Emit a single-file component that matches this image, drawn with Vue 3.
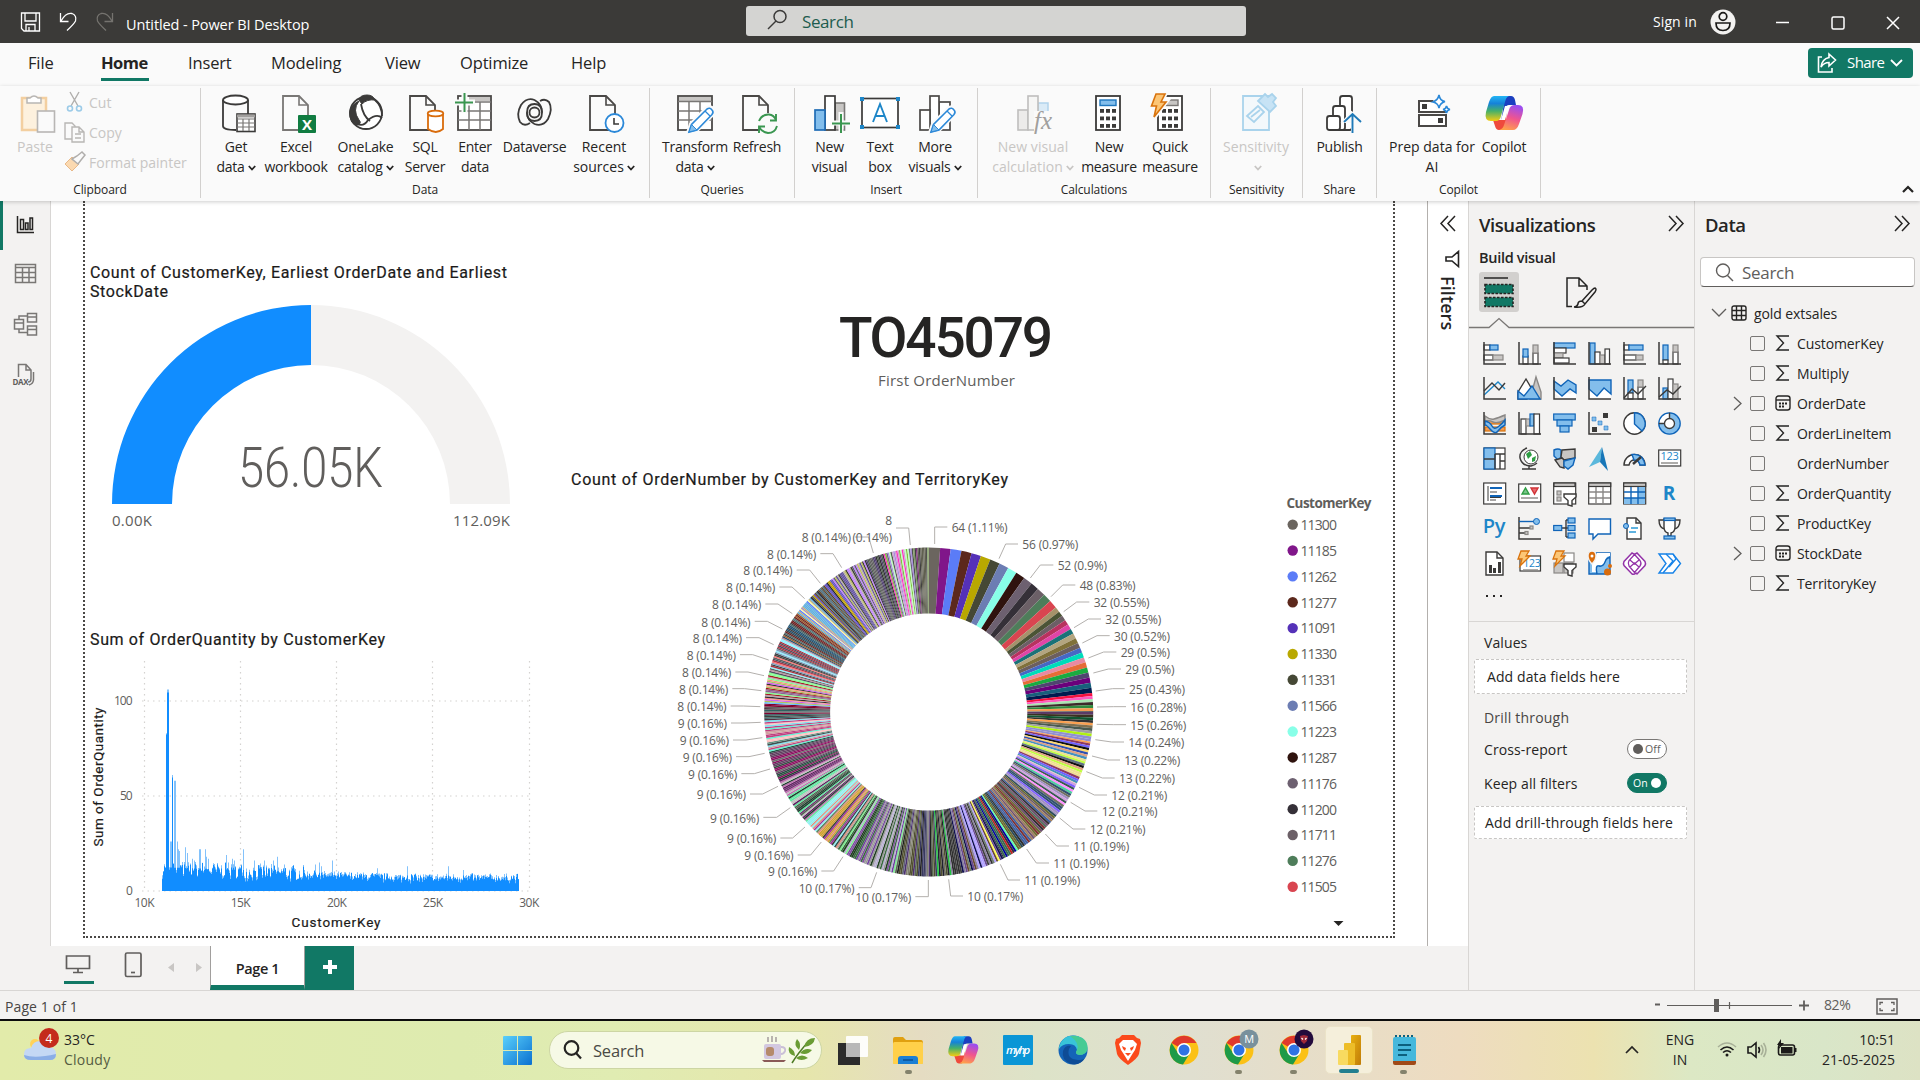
<script setup>
const page = (x, c = '#4a4846') =>
  `<path d="M${x + 1} 4H${x + 17}L${x + 26} 13V38H${x + 1}Z" fill="#fbfbfb" stroke="${c}" stroke-width="1.8"/><path d="M${x + 17} 4V13H${x + 26}" fill="none" stroke="${c}" stroke-width="1.6"/>`
const pencil = (x, y) =>
  `<g transform="translate(${x} ${y})"><path d="M-1 25L2 16 18 0Q22-2 24 1 26 4 24 6L8 22Z" fill="#fafafa" stroke="#fafafa" stroke-width="4"/><path d="M0 24L2.500 16.500 18 1Q21-1 23 2 25 4 23 6.500L8 22Z" fill="#fff" stroke="#2b88d8" stroke-width="1.600"/><path d="M0 24L2.500 16.500 8 22Z" fill="#83beec" stroke="#2b88d8"/><path d="M16 3L21 8" stroke="#2b88d8" stroke-width="1.300"/></g>`
const dots = (x, y, c) => [0, 1, 2].flatMap(r => [0, 1, 2].map(k => `<rect x="${x + k * 6}" y="${y + r * 7.5}" width="4" height="3.800" fill="${c}"/>`)).join('')
const copilot = `<defs><linearGradient id="cpa" x1="0" y1="0" x2="0" y2="1"><stop offset="0" stop-color="#22b5f5"/><stop offset=".3" stop-color="#1682d8"/><stop offset=".6" stop-color="#45b06a"/><stop offset="1" stop-color="#f5cc12"/></linearGradient><linearGradient id="cpb" x1=".6" y1="0" x2=".3" y2="1"><stop offset="0" stop-color="#9b4df0"/><stop offset=".5" stop-color="#f0558e"/><stop offset="1" stop-color="#ffa24a"/></linearGradient></defs><path d="M21 4H27Q30 4 31 8L32 13H25Q22 13 21 17L17 30Z" fill="#1b3fc0"/><path d="M9 28H17Q19 28 20 24L23 14 22 29Q21 38 18 38H15Q12 38 11 34Z" fill="#ef4a3c"/><path d="M10 4H25Q22 5 21 10L17 24Q16 29 12 29H7Q0 29 2 20L5 10Q7 4 10 4Z" fill="url(#cpa)"/><path d="M31 13H34Q41 13 38.500 22L35 32Q33 38 29 38H15Q19 37 20 33L25 18Q26 13 31 13Z" fill="url(#cpb)"/><path d="M21 14H25L21 28H17Z" fill="#fff"/>`

const ribbonIcons = {
  get: `<path d="M7 8V34Q7 38 20 38M32 8V22" fill="none" stroke="#3b3a39" stroke-width="1.800"/><ellipse cx="19.500" cy="8" rx="12.500" ry="4.500" fill="#fff" stroke="#3b3a39" stroke-width="1.800"/><rect x="21" y="22" width="18" height="17.500" fill="#fff" stroke="#3b3a39" stroke-width="1.600"/><path d="M21 24H39" stroke="#a19f9d" stroke-width="3"/><path d="M21 27H39M21 31H39M21 35H39M27 27V39M33 27V39" stroke="#797775" stroke-width="1.200"/>`,
  excel: page(6, '#797775') + `<rect x="22" y="23" width="18" height="18" rx="1" fill="#107c41"/><text x="31" y="37.500" text-anchor="middle" font-size="15" font-weight="700" fill="#fff">X</text>`,
  onelake: `<circle cx="20" cy="21" r="16" fill="#fff" stroke="#3b3a39" stroke-width="1.800"/><path d="M13 8Q14 3 21 3 27 3 29 8 21 7 16 12Z" fill="#3b3a39" stroke="#3b3a39"/><path d="M13 9Q2 14 4 25 6 34 12 33 16 31 13 28 6 18 13 9Z" fill="#3b3a39" stroke="#3b3a39"/><path d="M15 12Q17 24 24 29M11 32Q18 35 22 28 31 21 36 26M29 8Q36 14 36 24" fill="none" stroke="#3b3a39" stroke-width="1.800"/>`,
  sql: page(4) + `<path d="M23 22V37Q31 43 38 37V22Z" fill="#fff" stroke="#d96c0c" stroke-width="1.800"/><ellipse cx="30.500" cy="21.500" rx="7.800" ry="2.800" fill="#fff" stroke="#d96c0c" stroke-width="1.800"/>`,
  enter: `<rect x="3" y="4" width="33" height="34" fill="#fff" stroke="#4a4846" stroke-width="1.800"/><rect x="14" y="5" width="21" height="4" fill="#c8c6c4"/><path d="M3 19H36M3 28H36M14 10V38M25 10V38M14 10H36" stroke="#797775" stroke-width="1.500"/><path d="M9.500-1V21M-1 10.500H20" stroke="#fafafa" stroke-width="6"/><path d="M9.500 1V20M0 10.500H18" stroke="#3a9650" stroke-width="2"/>`,
  dataverse: `<g fill="none" stroke="#3b3a39" stroke-width="1.800"><circle cx="19.500" cy="20.500" r="5"/><path d="M27 20.500Q27 12 19.500 12 12 12 12 20.500 12 28 19.500 32 28 35 33 27 38 17 34 10 30 6 25 9"/><path d="M12 20.500Q12 29 19.500 29 27 29 27 20.500 27 12 19.500 8 12 5 6 13 1 22 5 30 9 35 15 31"/></g>`,
  recent: page(5) + `<circle cx="30.500" cy="31" r="9" fill="#fff" stroke="#2b88d8" stroke-width="1.800"/><path d="M30 26V32H35" fill="none" stroke="#3b3a39" stroke-width="1.600"/>`,
  transform: `<rect x="3" y="4" width="34" height="34" fill="#fff" stroke="#4a4846" stroke-width="1.800"/><rect x="4" y="5" width="32" height="4" fill="#c8c6c4"/><path d="M3 9.500H37M3 19H37M3 28H37M14 10V38M25 10V38" stroke="#797775" stroke-width="1.500"/>` + pencil(14, 16),
  refresh: page(5) + `<circle cx="31" cy="32" r="11" fill="#fafafa"/><g fill="none" stroke="#3a9650" stroke-width="1.900"><path d="M22 29Q25 22 32 22.500 37 23 39 28M39 22V28.500H33M40 34Q38 41 31 41 25 40 22 35M22 41V34.500H28"/></g>`,
  newvisual: `<rect x="25" y="11" width="9.500" height="27" fill="#c8c6c4" stroke="#797775" stroke-width="1.600"/><rect x="15" y="4" width="10" height="34" fill="#fff" stroke="#3b3a39" stroke-width="1.700"/><rect x="5" y="18" width="10" height="20" fill="#83beec" stroke="#1f6cb5" stroke-width="1.700"/><path d="M31 20V42M20 31H42" stroke="#fafafa" stroke-width="5"/><path d="M31 22V41M22 31.500H40" stroke="#3a9650" stroke-width="2"/>`,
  textbox: `<rect x="2" y="6.500" width="36" height="29" fill="#fff" stroke="#3b3a39" stroke-width="1.700"/><path d="M0 5h4v4h-4zM36 5h4v4h-4zM0 33h4v4h-4zM36 33h4v4h-4z" fill="#1d86c8"/><path d="M13 30L20 12 27 30M15.500 24H24.500" fill="none" stroke="#1d86c8" stroke-width="1.900"/>`,
  more: `<rect x="24" y="10" width="11" height="28" fill="#fff" stroke="#4a4846" stroke-width="1.700"/><rect x="15" y="4" width="9" height="34" fill="#fff" stroke="#4a4846" stroke-width="1.700"/><rect x="5" y="18" width="10" height="20" fill="#fff" stroke="#4a4846" stroke-width="1.700"/>` + pencil(16, 16),
  viscalc: `<g opacity=".45"><rect x="5" y="18" width="10" height="20" fill="#dcdad8" stroke="#797775" stroke-width="1.600"/><rect x="25" y="11" width="10" height="15" fill="#b5d9f5" stroke="#5aa5dc" stroke-width="1.500"/><rect x="15" y="4" width="10" height="34" fill="#f3f2f1" stroke="#797775" stroke-width="1.600"/></g><rect x="21" y="19" width="20" height="22" fill="#fafafa"/><text x="21" y="37" font-family="Liberation Serif, serif" font-style="italic" font-size="25" fill="#a19f9d">fx</text>`,
  measure: `<rect x="7" y="4" width="24" height="34" fill="#fff" stroke="#3b3a39" stroke-width="1.800"/><rect x="11" y="8" width="16" height="5.500" fill="#83beec" stroke="#1f77bf" stroke-width="1.400"/>` + dots(11, 17, '#3b3a39'),
  quick: `<rect x="8" y="4" width="24" height="34" fill="#fff" stroke="#3b3a39" stroke-width="1.800"/><rect x="12" y="8" width="16" height="5.500" fill="#c8c6c4" stroke="#797775" stroke-width="1.400"/>` + dots(12, 17, '#3b3a39') + `<path d="M6 1H16L12 9H17L4 26 6 15H1Z" fill="#fcd08a" stroke="#fafafa" stroke-width="4"/><path d="M6 2H15L11 10H16L4 25 6.500 14H1.500Z" fill="#fcc676" stroke="#d9730d" stroke-width="1.600"/>`,
  sens: `<g fill="#f3f8fb" stroke="#a9d3ec" stroke-width="1.800"><path d="M7 4H33V38H7Z"/><path d="M22 9L29 2 32 5 36 2 40 6 37 10 40 14 34 20Z" fill="#c7e3f5"/><path d="M11 24L22 14 28 20 18 30ZM15 25L24 18"/></g>`,
  publish: `<g fill="#fff" stroke="#3b3a39" stroke-width="1.800"><rect x="20" y="4" width="12" height="34" rx="2.500"/><rect x="13" y="14" width="12" height="24" rx="2.500"/><rect x="7" y="24" width="13" height="14" rx="2.500"/></g><path d="M33 20V42M33 20L25 29H42" fill="#fafafa" stroke="#fafafa" stroke-width="4"/><path d="M32.500 41V22M24 30L32.500 22 41 30" fill="none" stroke="#1f7ab8" stroke-width="1.900"/>`,
  prep: `<g fill="#fff" stroke="#4a4846" stroke-width="2"><rect x="7" y="9" width="27" height="11"/><rect x="7" y="23" width="27" height="11"/></g><rect x="10" y="12" width="5" height="5" fill="#3b3a39"/><rect x="26" y="26" width="5" height="5" fill="#3b3a39"/><path d="M20 4h17v13h-13z" fill="#fafafa"/><g fill="#fff" stroke="#2b88d8" stroke-width="1.600"><path d="M27 3Q28 9 33 9.500 28 11 27 16 26 11 21 10 26 8 27 3Z"/><path d="M34.500 14Q35 17 38 17.500 35 18 34.500 21 34 18 31 17.500 34 17 34.500 14Z"/></g>`,
  copilot,
}

const groups = [
  { n: 'Data', w: 449, p: 7, items: [['get', 56, 'Get', 'data', 1], ['excel', 64, 'Excel', 'workbook'], ['onelake', 75, 'OneLake', 'catalog', 1], ['sql', 44, 'SQL', 'Server'], ['enter', 56, 'Enter', 'data'], ['dataverse', 63, 'Dataverse', ''], ['recent', 76, 'Recent', 'sources', 1]] },
  { n: 'Queries', w: 145, p: 12, items: [['transform', 66, 'Transform', 'data', 1], ['refresh', 58, 'Refresh', '']] },
  { n: 'Insert', w: 183, p: 5, items: [['newvisual', 59, 'New', 'visual'], ['textbox', 42, 'Text', 'box'], ['more', 68, 'More', 'visuals', 1]] },
  { n: 'Calculations', w: 233, p: 12, items: [['viscalc', 86, 'New visual', 'calculation', 1, 1], ['measure', 66, 'New', 'measure'], ['quick', 56, 'Quick', 'measure']] },
  { n: 'Sensitivity', w: 92, p: 5, items: [['sens', 80, 'Sensitivity', '', 1, 1]] },
  { n: 'Share', w: 74, p: 5, items: [['publish', 63, 'Publish', '']] },
  { n: 'Copilot', w: 164, p: 11, items: [['prep', 88, 'Prep data for', 'AI'], ['copilot', 56, 'Copilot', '']] },
]
const tabs = [['File', 28, 27], ['Home', 46, 48], ['Insert', 39, 43], ['Modeling', 40, 74], ['View', 40, 37], ['Optimize', 38, 71], ['Help', 40, 36]]

/* Line chart */
let seed = 7
const rnd = () => ((seed = (seed * 16807) % 2147483647) / 2147483647)
const peaks = { 165: 12, 166: 83, 167: 106, 168: 106, 170: 26, 171: 26, 172: 61, 174: 58, 175: 58, 177: 26, 178: 22, 179: 21, 185: 23, 187: 20, 192: 17, 194: 16, 199: 22, 200: 22, 205: 22, 206: 18, 208: 17, 226: 19, 228: 15, 232: 17, 234: 16, 243: 22, 254: 16, 264: 16, 273: 16, 277: 18, 284: 14, 315: 14, 319: 15, 321: 13, 332: 16, 377: 12, 407: 13, 448: 13, 463: 11 }
const bars = []
for (let x = 162; x < 519; x++) {
  const t = (x - 162) / 357
  const top = 11.5 - 4.4 * Math.min(1, t * 1.5)
  const v = peaks[x] || top + (rnd() - 0.4) * (t < 0.4 ? 8 : 3.6)
  const d = peaks[x] && !(x > 165 && x < 169) && x !== 172 ? top + 1 : v - rnd() * 2
  bars.push({ x, v: v * 1.9, d: d * 1.9 })
}
const light = bars.map(b => `M${b.x} 891V${(891 - b.v).toFixed(1)}h1V891z`).join('')
const dark = bars.map(b => `M${b.x} 891V${(891 - b.d).toFixed(1)}h1V891z`).join('')

/* Donut chart */
const slices = []
let ang = 0
const polar = (r, a) => `${(928.7 + r * Math.sin(a * Math.PI / 180)).toFixed(2)} ${(712 - r * Math.cos(a * Math.PI / 180)).toFixed(2)}`
const slice = (w, c) => {
  const b = ang + w
  slices.push({ c, d: `M${polar(164.5, ang)}A164.500 164.500 0 0 1 ${polar(164.5, b)}L${polar(98.6, b)}A98.600 98.600 0 0 0 ${polar(98.6, ang)}Z` })
  ang = b
}
const keys = [['11300', '#6b655f'], ['11185', '#80168a'], ['11262', '#5b7cf7'], ['11277', '#5c281c'], ['11091', '#5531b8'], ['11330', '#b9a800'], ['11331', '#454835'], ['11566', '#6c7db3'], ['11223', '#88ffe8'], ['11287', '#2f130e'], ['11176', '#6d6070'], ['11200', '#353038'], ['11711', '#6c6067'], ['11276', '#4e7d5a'], ['11505', '#d94550']]
const big = [4, 3.7, 3.8, 3.6, 3.4, 3.5, 3.5, 3.4, 3.3, 3.3, 3.2, 2.9, 3, 3, 3]
keys.forEach((k, i) => slice(big[i], k[1]))
'#a6926a #4b5435 #6c5f66 #b8325f #e044a7 #1a7278 #b3a580 #80713a #6c5f5f #4668c5 #00dcba #e88aa2 #e66c37 #1aab40 #4f4570 #6b007b #17607c #001b4f'.split(' ').forEach(c => slice(1.82, c))
const regions = [
  [90, 1.05, 'f5113f ff5bc0 a8e4b0 3d2a2a 2f8a3d f39b52 606060'],
  [101, .95, '5a3a66 3a3020 105530 333333 fba050 807050 4a5a50 a0a0a0 b0f010 9090d0'],
  [116, .82, '8f3a5f 7060ff 101010 ffd870 3050b0 e0a080 4590c0 f0e090 c0ff40 607080'],
  [129, .78, 'd0a0e0 8060ff 3a5a50 ff90ff 50d0a0 305070 707060 a090c0'],
  [147, .72, '2a4a5a 6a6a30 6a5a6a a08060 4060a0 303030 705070 507060 803030'],
  [153, .7, '60ffb0 0000a0 30303a c02020 3a6a50'],
  [172, .66, '101050 6a4a90 ffff50 6a4a30 b0a0ff 708070 303030 8a80a0 404040'],
  [177, .62, '20c040 202030 505030 707060'],
  [192, .62, '383860 505030 5a6a50 202020 4b3070 808070 606078'],
  [214, .6, '80f090 7040a0 b8b0d0 3a6a40 8050a0 204020 9a9a9a'],
  [228, .58, 'e09080 305050 90f0f0 404040 a030a0 608060 d0a030'],
  [246, .56, '60e8a0 c070b0 204030 602060 c0c0c0 506050 703070'],
  [256, .56, '8a1060 305040 205040 604060 707070'],
  [267, .55, '60f0d0 c04080 d0a0a0 80e0f0 405050 609080 ffc0c0'],
  [273, .55, '503040 3a6a6a 404040 306060 800030 606060'],
  [284, .5, '60c0ff b0c060 d060f0 ff9080 303030 c0a0b0 a02020 80ff90 906090'],
  [297, .5, '505060 c090a0 606060 90f0ff b03040 404040 80a0c0 ff7070'],
  [307, .5, '205070 a06030 404040 507070 702020'],
  [314, .5, '60b0e0 c0b080 6080ff ffffa0 b090c0'],
  [324, .5, '202030 505050 c0a000 6050c0 604020 507080'],
  [337, .5, 'c080ff 606070 c0c060 6050a0 b8b0a8 404030'],
  [344, .5, '303030 504070 506050 606060'],
  [354, .5, 'ff30c0 80c040 706080 a890e0 c0ffc0 506050 d0a0d0'],
  [360, .5, '505050 80a060 404040 803080 606050'],
]
for (const [end, w, cs] of regions) {
  const list = cs.split(' ')
  let i = 0
  while (ang < end - 0.01) {
    const j = i < list.length ? i : Math.floor(rnd() * list.length)
    slice(Math.min(w, end - ang), '#' + list[j])
    i++
  }
}
const rightLabels = [['64 (1.11%)', 875, 203, 824, 824, 252], ['56 (0.97%)', 1087, 254, 1037, 1017, 296], ['52 (0.9%)', 1193, 317, 1141, 1111, 354], ['48 (0.83%)', 1259, 377, 1208, 1173, 410], ['32 (0.55%)', 1301, 428, 1250, 1211, 455], ['32 (0.55%)', 1336, 479, 1285, 1242, 503], ['30 (0.52%)', 1362, 529, 1311, 1267, 549], ['29 (0.5%)', 1382, 578, 1331, 1285, 594], ['29 (0.5%)', 1396, 629, 1345, 1300, 639], ['25 (0.43%)', 1407, 688, 1358, 1307, 693], ['16 (0.28%)', 1411, 742, 1360, 1311, 741], ['15 (0.26%)', 1411, 796, 1360, 1310, 793], ['14 (0.24%)', 1405, 848, 1355, 1306, 839], ['13 (0.22%)', 1393, 902, 1343, 1296, 888], ['13 (0.22%)', 1377, 956, 1327, 1279, 935], ['12 (0.21%)', 1354, 1007, 1303, 1257, 982], ['12 (0.21%)', 1325, 1055, 1275, 1232, 1027], ['12 (0.21%)', 1289, 1109, 1239, 1199, 1074], ['11 (0.19%)', 1240, 1160, 1190, 1156, 1122], ['11 (0.19%)', 1180, 1211, 1129, 1100, 1167], ['11 (0.19%)', 1093, 1262, 1044, 1021, 1213], ['10 (0.17%)', 922, 1310, 872, 866, 1258]]
const e = '8 (0.14%)', n = '9 (0.16%)', m = '10 (0.17%)'
const leftLabels = [[e, 573, 233, 626, 640, 279], [e, 469, 283, 519, 545, 323], [e, 398, 332, 449, 481, 370], [e, 346, 383, 396, 434, 416], [e, 304, 434, 354, 397, 461], [e, 272, 486, 322, 367, 507], [e, 246, 535, 297, 341, 554], [e, 228, 586, 278, 326, 600], [e, 214, 638, 264, 312, 647], [e, 205, 688, 254, 304, 692], [e, 200, 740, 250, 301, 740], [n, 201, 791, 252, 302, 787], [n, 207, 842, 258, 307, 833], [n, 216, 892, 267, 314, 880], [n, 232, 943, 283, 330, 927], [n, 258, 1004, 308, 354, 979], [n, 298, 1074, 350, 391, 1043], [n, 349, 1136, 398, 435, 1101], [n, 401, 1187, 452, 484, 1146], [n, 472, 1235, 521, 549, 1190], [m, 584, 1285, 633, 650, 1237], [m, 754, 1312, 805, 805, 1260]]
const X = v => 660 + v / 3
const Y = v => 460 + v / 3
const labels = [
  ...rightLabels.map(l => ({ t: l[0], x: X(l[1]), y: Y(l[2]) + 4.5, w: l[0].length * 6.7 - 11, d: `M${X(l[4])} ${Y(l[5])}L${X(l[3])} ${Y(l[2] - 2)}H${X(l[1] - 13)}` })),
  ...leftLabels.map(l => ({ t: l[0], x: X(l[1]) - (l[0].length * 6.7 - 11), y: Y(l[2]) + 4.5, w: l[0].length * 6.7 - 11, d: `M${X(l[4])} ${Y(l[5])}L${X(l[3])} ${Y(l[2] - 2)}H${X(l[1] + 12)}` })),
]

/* Visual gallery, 23 x 23 each */
const K = '#3b3a39', B = '#1064b8', L = '#83beec', G = '#c8c6c4', S = '#8a8886'
const axes = `<path d="M1 0V22H23" fill="none" stroke="${K}" stroke-width="1.500"/>`
const r = (x, y, w, h, f = '#fff', s = K) => `<rect x="${x}" y="${y}" width="${w}" height="${h}" fill="${f}" stroke="${s}" stroke-width="1.200"/>`
const p = (d, s = K, f = 'none', w = 1.4) => `<path d="${d}" fill="${f}" stroke="${s}" stroke-width="${w}"/>`
const bolt = `<path d="M3-1H11L8 4H12L2 14 4 7H0Z" fill="#fcc676" stroke="#d9730d" stroke-width="1.300"/>`
const funnel = p('M11 12H23V15L19 18.500V24L15 23V18.500L11 15Z', K, '#fff')
const t = (x, y, s, txt, w = 400, c = '#1d86c8') => `<text x="${x}" y="${y}" font-size="${s}" font-weight="${w}" fill="${c}" text-anchor="middle">${txt}</text>`
const gallery = [
  r(1, 3, 6, 5) + r(7, 3, 8, 5, L, B) + r(1, 13, 9, 5) + r(10, 13, 10, 5, G, S) + axes,
  r(5, 14, 5, 8) + r(5, 7, 5, 8, L, B) + r(15, 11, 5, 11) + r(15, 3, 5, 8, G, S) + axes,
  r(1, 1, 21, 5, L, B) + r(1, 6, 12, 5) + r(1, 11, 9, 5, G, S) + r(1, 16, 15, 5) + axes,
  r(2, 1, 5, 21, L, B) + r(7, 10, 5, 12) + r(12, 13, 5, 9, G, S) + r(17, 7, 4.5, 15) + axes,
  r(1, 3, 5, 5) + r(6, 3, 14, 5, L, B) + r(1, 13, 12, 5) + r(13, 13, 7, 5, G, S) + axes,
  r(5, 3, 5, 15, L, B) + r(5, 18, 5, 4) + r(15, 10, 5, 12) + r(15, 3, 5, 7, G, S) + axes,
  p('M1 18L15 5 22 12', '#1d86c8') + p('M1 14L9 6 16 13 22 6') + axes,
  p('M18 0L23 15V22H12Z', S, G) + p('M0 15L8 2 15 14 9 22H0Z', K, '#fff') + p('M0 14L6 19 14 9 22 22H0Z', B, L),
  p('M1 16L8 21H23V13L17 17 9 14Z', 'none', '#fff') + p('M1 4L8 9 15 3 23 8V16L17 12 9 19 1 12Z', B, L) + axes,
  p('M1 22V12L9 19 16 11 23 17V22Z', 'none', '#fff') + p('M1 3H23V17L16 11 9 19 1 12Z', B, L) + axes,
  r(5, 3, 5, 13, L, B) + r(5, 16, 5, 6) + r(15, 10, 5, 12) + r(15, 3, 5, 7, G, S) + p('M1 21L9 12 15 17 23 9') + axes,
  r(5, 11, 5, 11, L, B) + r(10, 2, 5, 20) + r(15, 7, 5, 15, G, S) + p('M1 20L9 13 15 17 23 9') + axes,
  r(2, 8, 20, 4, '#f39b52', '#d9730d') + r(2, 15, 20, 4, '#f39b52', '#d9730d') + p('M2 4Q7 8 11 7T22 3V8Q14 12 10 10T2 9Z', S, G) + p('M2 9Q7 10 9 14T15 15 22 8V13Q18 15 15 19T7 17 2 14Z', B, L) + axes,
  r(3, 7, 5, 15) + r(8, 7, 4, 7, G, S) + r(12, 2, 4, 12, L, B) + r(16, 2, 5.500, 20) + axes,
  r(.7, 2, 21.500, 6, L, B) + r(4, 8, 15, 6, L, B) + r(7, 14, 9, 6, L, B),
  axes + `<path d="M15 1h5v5h-5zM4 15h5v5h-5z" fill="${K}"/><path d="M4 5h4v4h-4zM10 9h4v4h-4zM16 14h4v4h-4z" fill="${L}" stroke="${B}" stroke-width=".500"/>`,
  `<circle cx="11.500" cy="11.500" r="10.700" fill="#fff" stroke="${K}" stroke-width="1.400"/>` + p('M11.500 .800A10.700 10.700 0 0 1 19 19L11.500 12Z', B, L),
  `<circle cx="11.500" cy="11.500" r="8" fill="none" stroke="${L}" stroke-width="6"/><path d="M3.500 11.500A8 8 0 0 1 11.500 3.500" fill="none" stroke="#fff" stroke-width="6"/><circle cx="11.500" cy="11.500" r="10.700" fill="none" stroke="${B}" stroke-width="1.300"/><circle cx="11.500" cy="11.500" r="5" fill="#fff" stroke="${K}" stroke-width="1.300"/>` + p('M.800 11.500H6M11.500 .800V6'),
  r(1, 1, 21, 21) + r(1, 1, 11, 21, L, B) + p('M12 7H22M17 14H22M12 7V22M17 7V22M1 12H12'),
  `<circle cx="13" cy="10" r="7" fill="#fff" stroke="${K}"/><path d="M8 7L12 4 14 8 10 12ZM14 11L18 9 17 14 14 15Z" fill="#2f9e44"/>` + p('M9 1Q1 4 2 11 4 19 13 19 17 18 19 16M11 19V22M4 22H18'),
  p('M1 3Q5 1 8 3V10L5 13 1 9Z', B, L) + p('M9 3L22 2V11L11 13 8 10Z', K, G) + p('M2 13L9 11 11 13V21L7 20Z', K, G) + p('M11 14L22 11 20 18 15 22 11 19Z', B, L),
  `<path d="M14 0L1 20 12 15Z" fill="#5ab8dc"/><path d="M14 0L20 24 12 15Z" fill="#1776b8"/>`,
  p('M1 18A10.500 10.500 0 0 1 22 18H17Q16 13 11.500 13 7 13 6 18Z', K, '#fff') + p('M9 7.500Q20 6 22 18H17Q16 13 11 13Z', B, L) + p('M10 17L18 10', K, 'none', 2.400),
  r(.700, 3, 22, 16) + t(11.500, 13, 11, '123') + p('M3 16H20', S),
  r(.700, 1, 22, 21) + p('M5 4V19M7 15.500H18', K, 'none', 1) + p('M7 6H19M7 14H19', B, 'none', 2) + p('M7 10H14M7 18H13', S),
  r(.700, 2, 22, 18) + p('M4 12L7.500 6 11 12Z', '#2f9e44', '#7bc58a') + p('M13 6H20L16.500 12Z', '#d13438', '#e8686c') + p('M3 16H20', S),
  r(.700, 1, 22, 21) + r(1, 1, 21, 3.500, G) + r(4, 9, 4, 4, G, S) + r(4, 15, 4, 4, G, S) + funnel,
  r(.700, 1, 22, 21) + r(.700, 1, 22, 3.500, G) + p('M1 10H22M1 16H22M8 5V22M15 5V22', S),
  r(.700, 1, 22, 21) + r(.700, 1, 22, 3.500, G) + `<path d="M15 5h7v17H1v-6h14z" fill="${L}"/>` + p('M1 10H22M1 16H22M8 5V22M15 5V22', B),
  t(11, 18, 19, 'R', 700),
  t(11, 16, 20, 'Py', 600),
  axes + p('M1 4.500H16', B) + `<circle cx="18.500" cy="4.500" r="3" fill="${L}" stroke="${B}"/>` + p('M1 11H12M1 16H7') + r(12, 9, 3, 3, G, S) + r(7, 14.500, 3, 3, G, S),
  p('M9 11H13M13 3V20M13 3H15M13 11H15M13 20H15') + r(.700, 8.500, 8, 5, L, B) + r(15, 1, 7, 5, L, B) + r(15, 8.500, 7, 5, L, B) + r(15, 16, 7, 5, L, B),
  p('M1 2H22.500V17H10L5 22V17H1Z', B, '#fff'),
  p('M4 1H13L18 6V22H4Z', K, '#fff') + p('M13 1V6H18') + p('M8 11H15M6 15H13', '#2b9bd8') + `<circle cx="3" cy="9" r="2.500" fill="${L}" stroke="${B}"/>`,
  p('M6 3H1Q1 11 7 12M17 3H22Q22 11 16 12') + p('M6 2H17V10Q17 15 13 16V19H10V16Q6 15 6 10Z', K, '#fff') + r(6, 1, 11, 2.500, L, B) + r(6, 19, 11, 3, L, B),
  p('M3 0H14L20 6V23H3Z', K, '#fff') + p('M14 0V6H20') + `<path d="M6 13h3v8h-3zM10 16h3v5h-3zM15 10h3v11h-3z" fill="${K}"/>`,
  r(2, 4, 20.500, 15) + t(14, 15, 10.500, '123') + p('M5 18H20', S) + bolt,
  r(11, 1, 10, 9, '#fff', S) + r(1, 11, 9, 10, G, S) + r(11, 11, 9, 10, G, S) + bolt + funnel,
  p('M1 1H22V22H1Z', B, L) + p('M9 1H22V4Q18 4 17 9T11 13 9 20H4V12Z', 'none', '#fff') + p('M22 6Q19 5 17 10T11 14 9 22', B) + p('M4-1Q8-1 8 4 8 8 4 12 0 8 0 4 0-1 4-1Z', '#f3f2f1', '#d96c0c') + `<circle cx="4" cy="4" r="1.500" fill="#fff"/><circle cx="19.500" cy="20" r="3.500" fill="#d96c0c"/><circle cx="22" cy="14" r="2" fill="#d96c0c"/>`,
  p('M9 1L1 9.500Q0 11.500 1 13.500L9 22Q11 23 13 21L14 22 22 13.500Q23 11.500 22 9.500L14 1 11.500 2.500Z', '#9332a8', '#fff', 1.500) + p('M11.500 2.500L17 8.500Q19 11.500 17 14L11.500 20.500 6 14Q4.500 11.500 6 8.500ZM7 8L11.500 12 16 8M7 15L11.500 11 16 15', '#9332a8', 'none', 1.300),
  p('M1 2H15L22.500 11.500 15 21H1L8 11.500Z', '#1783e8', '#fff') + p('M8 2L15 9 5 21M15 2L18 7 11 15', '#1783e8'),
]

const fields = [['CustomerKey', 's'], ['Multiply', 's'], ['OrderDate', 'd'], ['OrderLineItem', 's'], ['OrderNumber', ''], ['OrderQuantity', 's'], ['ProductKey', 's'], ['StockDate', 'd'], ['TerritoryKey', 's']]

const chrome = `<circle cx="15" cy="15" r="14.500" fill="#fbc116"/><path d="M15 15L2.500 8A14.500 14.500 0 0 1 27.500 8H15Z" fill="#e0392c"/><path d="M2.500 8A14.500 14.500 0 0 0 14 29.500L21 18 15 15 9 18Z" fill="#1e9a48"/><circle cx="15" cy="15" r="7" fill="#fff"/><circle cx="15" cy="15" r="5.500" fill="#2f72e4"/>`
const apps = [
  [`<rect x="0" y="8" width="22" height="22" fill="#2b2b2b"/><rect x="8" y="1" width="22" height="21" rx="1" fill="#fff" opacity=".92"/><rect x="8" y="8" width="14" height="14" fill="#b8b8b8"/>`],
  [`<path d="M0 4Q0 2 2 2H10L13 5H28Q30 5 30 8V27Q30 29 28 29H2Q0 29 0 27Z" fill="#e0a010"/><rect y="7" width="30" height="22" rx="1.500" fill="#ffd04a"/><path d="M5 29V24Q5 21 8 21H22Q25 21 25 24V29Z" fill="#1b7fd4"/><path d="M10 25H20" stroke="#0b4f94" stroke-width="1.500"/>`, 1],
  [`<g transform="translate(-1 -2) scale(.8)">${copilot}</g>`],
  [`<rect width="30" height="30" rx="1" fill="#0a96d6"/><text x="3" y="19" font-size="11.500" font-style="italic" font-weight="600" fill="#fff" textLength="24">myhp</text>`],
  [`<circle cx="15" cy="15" r="14.500" fill="#1464b8"/><path d="M1 12Q4 0 16 .500 30 2 29.500 14 28 20 21 20 16 19 19 15 18 9 11 9 4 9 1 14Z" fill="#38c4d8"/><path d="M18 1Q30 3 29.500 14 28 20 21 20 16 19 19 15 22 8 12 1Z" fill="#4fd070" opacity=".65"/><path d="M11 14Q8 24 20 25 25 25 27 23 22 31 13 29 3 25 5 16 7 10 13 11Z" fill="#0e4c96"/>`],
  [`<path d="M9 0H21L24 3 27 4 28 8 26 19Q25 23 15 30 5 23 4 19L2 8 3 4 6 3Z" fill="#fb4a1c"/><path d="M10 5H20L24 9 22 15 20 18 15 26 10 18 8 15 6 9Z" fill="#fff"/><path d="M9 11L13 13 12 16 10 14ZM21 11L17 13 18 16 20 14ZM12 18H18L15 21Z" fill="#fb4a1c"/>`],
  [chrome],
  [chrome + `<circle cx="25" cy="4" r="9.500" fill="#78909c"/><text x="25" y="8" text-anchor="middle" font-size="11" fill="#fff">M</text>`, 1],
  [chrome + `<circle cx="25" cy="4" r="9.500" fill="#230a3c"/><path d="M21 1L25 0 29 1 28 6 25 9 22 6Z" fill="#a02838"/><path d="M22.500 3L24 4.500M27.500 3L26 4.500" stroke="#fff" stroke-width="1.200"/>`, 1],
  [`<defs><linearGradient id="pbi" x1="0" y1="0" x2="1" y2="1"><stop offset="0" stop-color="#e8b010"/><stop offset="1" stop-color="#c07c08"/></linearGradient></defs><rect x="17" width="10" height="30" rx="1" fill="url(#pbi)"/><rect x="10" y="8" width="11" height="22" rx="1" fill="#edbd28"/><rect x="4" y="15" width="10" height="15" rx="1" fill="#f8da60"/>`, 2],
  [`<rect x="4" y="2" width="23" height="25" rx="2" fill="#46b8dc"/><path d="M4 26H27V28Q27 30 25 30H6Q4 30 4 28Z" fill="#a04a18"/><path d="M7 2V0M11 2V0M15 2V0M19 2V0M23 2V0" stroke="#10607c" stroke-width="2"/><path d="M9 10H22M9 15H22M9 20H18" stroke="#0c607e" stroke-width="1.800"/>`, 1],
]
</script>

<template>
  <div class="app">
    <header class="title">
      <svg class="tb" width="130" height="43" fill="none" stroke="#fff" stroke-width="1.300">
        <path d="M21.500 13H39.500V31H24L21.500 28.500ZM25 13V21H36V13M26 31V24.500H35V31M29 31V27" />
        <path d="M60.500 13V21.500H68.500M61 21Q66 12 72 13.500 77 15.500 75.500 21 74 24 67 30.500" />
        <path d="M112.500 13V21.500H104.500M112 21Q107 12 101 13.500 96 15.500 97.500 21 99 24 106 30.500" stroke="#75736f" />
      </svg>
      <span class="doc">Untitled - Power BI Desktop</span>
      <div class="search">
        <svg width="22" height="22" fill="none" stroke="#3b3a39" stroke-width="1.500"><circle cx="14" cy="7.500" r="6" /><path d="M10 12L2 20" /></svg>
        <span>Search</span>
      </div>
      <span class="sign">Sign in</span>
      <svg class="avatar" width="26" height="26"><circle cx="13" cy="13" r="12.500" fill="#f3f2f1" /><circle cx="13" cy="7.500" r="3.800" fill="none" stroke="#1b1a19" stroke-width="1.700" /><path d="M6 14H20Q20 21.500 13 21.500 6 21.500 6 14Z" fill="none" stroke="#1b1a19" stroke-width="1.700" /></svg>
      <svg class="win" width="130" height="20" fill="none" stroke="#fff" stroke-width="1.500"><path d="M1 9.500H14" /><rect x="57" y="4" width="12" height="12" rx="1.500" /><path d="M112 4L124 16M124 4L112 16" /></svg>
    </header>

    <nav class="tabs">
      <span v-for="tb in tabs" :key="tb[0]" class="tab" :class="{ on: tb[0] === 'Home' }" :style="{ marginLeft: tb[1] + 'px', width: tb[2] + 'px' }">{{ tb[0] }}</span>
      <button class="share">
        <svg width="20" height="22" fill="none" stroke="#fff" stroke-width="1.600"><path d="M5 5H1.500V20H15V16" /><path d="M12 2L18.500 8 12 14V10.500Q7 10.500 4 15 5 7 12 5.500Z" /></svg>
        <span>Share</span>
        <svg width="13" height="8" fill="none" stroke="#fff" stroke-width="1.800"><path d="M1 1L6.500 6.500 12 1" /></svg>
      </button>
    </nav>

    <section class="ribbon">
      <div class="group clip">
        <div class="items">
          <div class="item off paste">
            <svg class="ric" viewBox="0 0 40 42"><rect x="7" y="6" width="24" height="32" fill="#fdf1de" stroke="#f3cfa0" stroke-width="2.500" /><path d="M13 6H15Q19 2 23 6H26V11H12V6Z" fill="#fff" stroke="#b8b6b4" stroke-width="1.500" /><rect x="22.500" y="19" width="17" height="21" fill="#fafafa" stroke="#b8b6b4" stroke-width="1.600" /></svg>
            <span>Paste</span>
          </div>
          <div class="mini">
            <div><svg width="22" height="22"><path d="M6 1L14 15M15 1L7 15" stroke="#b0aeac" stroke-width="1.400" fill="none" /><g fill="none" stroke="#9ccbe8" stroke-width="1.600"><circle cx="6" cy="17.500" r="2.500" /><circle cx="15" cy="17.500" r="2.500" /></g></svg>Cut</div>
            <div><svg width="22" height="22" fill="#fafafa" stroke="#b8b6b4" stroke-width="1.400"><path d="M1 2H8L11 5V18H1Z" /><path d="M8 6H15L20 11V21H8ZM15 6V11H20M11 13H17M11 17H17" /></svg>Copy</div>
            <div><svg width="22" height="22"><path d="M1 13L8 6 15 13 8 20Z" fill="#fbd9b0" stroke="#e8b888" /><path d="M8 8L13 5 18 1 21 4 17 9 14 13Z" fill="#fafafa" stroke="#b0aeac" stroke-width="1.500" /></svg>Format painter</div>
          </div>
        </div>
        <div class="gname">Clipboard</div>
      </div>
      <div v-for="g in groups" :key="g.n" class="group" :style="{ width: g.w + 'px' }">
        <div class="items" :style="{ paddingLeft: g.p + 'px' }">
          <div v-for="i in g.items" :key="i[0]" class="item" :class="[i[0], { off: i[5] }]" :style="{ width: i[1] + 'px' }">
            <svg class="ric" viewBox="0 0 40 42" v-html="ribbonIcons[i[0]]"></svg>
            <span>{{ i[2] }}</span>
            <span>{{ i[3] }}<svg v-if="i[4]" class="chev" width="8" height="6" fill="none" stroke="currentColor" stroke-width="1.800"><path d="M.8 1L4 4.500 7.200 1" /></svg></span>
          </div>
        </div>
        <div class="gname">{{ g.n }}</div>
      </div>
      <svg class="collapse" width="12" height="8" fill="none" stroke="#252423" stroke-width="2.200"><path d="M1 7L6 2 11 7" /></svg>
    </section>

    <main class="work">
      <div class="left">
        <div class="upper">
          <aside class="rail">
            <i class="active"></i>
            <svg width="50" height="200" fill="none" stroke="#797775" stroke-width="1.500">
              <path d="M17.500 15V31.500H34M20.500 18.500h3v10h-3zM25.500 22h2.500v6.500h-2.500zM30 17h2.500v11.500h-2.500z" stroke="#252423" />
              <path d="M15.500 63.500H35.500V81.500H15.500ZM15.500 66.500H35.500M15.500 71.500H35.500M15.500 76.500H35.500M22.500 67V81M29 67V81" />
              <path d="M27.500 112.500H36.500V121H27.500ZM27.500 116H36.500M27.500 125H36.500V134H27.500ZM27.500 128.500H36.500M14.500 118.500H23.500V128H14.500ZM14.500 122H23.500M19 118V115H27M19 128V131.500H27" />
              <path d="M18.500 176V163.500H26L31 169V178Q31 181 28 181M26 164V169H31M33.500 171V179Q33 183 29 184" />
              <text x="12.500" y="183.500" font-size="8" font-weight="700" fill="#605e5c" stroke="none" textLength="16">DAX</text>
            </svg>
          </aside>
          <section class="canvas">
            <div class="report">
              <svg class="visual gauge" viewBox="84 240 450 310">
                <text class="vt" x="90" y="278" textLength="417">Count of CustomerKey, Earliest OrderDate and Earliest</text>
                <text class="vt" x="90" y="297" textLength="78">StockDate</text>
                <path d="M112 504A199 199 0 0 1 311 305V365A139 139 0 0 0 172 504Z" fill="#118dff" />
                <path d="M311 305A199 199 0 0 1 510 504H450A139 139 0 0 0 311 365Z" fill="#f3f2f1" />
                <text class="value" x="238" y="486.500" textLength="145" lengthAdjust="spacingAndGlyphs">56.05K</text>
                <text class="end" x="112" y="526" textLength="40">0.00K</text>
                <text class="end" x="453" y="526" textLength="57">112.09K</text>
              </svg>
              <svg class="visual card" viewBox="740 290 400 110">
                <text class="big" x="839" y="357" textLength="214">TO45079</text>
                <text class="end" x="878" y="385.500" textLength="137">First OrderNumber</text>
              </svg>
              <svg class="visual line" viewBox="84 620 460 315">
                <text class="vt" x="90" y="645" textLength="295">Sum of OrderQuantity by CustomerKey</text>
                <g class="grid">
                  <path v-for="x in [144.5, 240.5, 336.5, 432.5, 529.5]" :key="x" :d="`M${x} 661V891`" />
                  <path v-for="y in [701, 796, 891]" :key="y" :d="`M142 ${y}H530`" />
                </g>
                <path :d="light" fill="#83c2fb" />
                <path :d="dark" fill="#118dff" />
                <g class="ax">
                  <text x="114" y="705" textLength="18.500">100</text>
                  <text x="120" y="800" textLength="12.500">50</text>
                  <text x="126" y="895">0</text>
                  <text v-for="(k, i) in ['10K', '15K', '20K', '25K', '30K']" :key="k" :x="134.500 + i * 96.200" y="907" textLength="20">{{ k }}</text>
                </g>
                <text class="axt" x="291.500" y="926.500" textLength="89">CustomerKey</text>
                <text class="axt" transform="translate(103 846.500) rotate(-90)" textLength="139">Sum of OrderQuantity</text>
              </svg>
              <svg class="visual donut" viewBox="560 460 830 475">
                <text class="vt" x="571" y="485" textLength="437">Count of OrderNumber by CustomerKey and TerritoryKey</text>
                <path v-for="(s, i) in slices" :key="i" :d="s.d" :fill="s.c" />
                <g class="lead">
                  <path v-for="(l, i) in labels" :key="i" :d="l.d" />
                  <path d="M910.300 545L908.700 528H896" />
                </g>
                <g class="dl">
                  <text v-for="(l, i) in labels" :key="i" :x="l.x" :y="l.y" :textLength="l.w">{{ l.t }}</text>
                  <text x="885.300" y="525">8</text>
                  <text x="852.500" y="541.500" textLength="39.500">(0.14%)</text>
                </g>
                <text class="lt" x="1286.500" y="508" textLength="85">CustomerKey</text>
                <g v-for="(k, i) in keys" :key="k[0]">
                  <circle cx="1292.700" :cy="524.600 + i * 25.870" r="5.200" :fill="k[1]" />
                  <text class="lk" x="1300.500" :y="530 + i * 25.870" textLength="36.500">{{ k[0] }}</text>
                </g>
                <path d="M1333.500 921H1343.500L1338.500 926Z" fill="#252423" />
              </svg>
            </div>
          </section>
          <aside class="filters">
            <svg width="17" height="18" class="dbl"><path d="M8 1L1 8.500 8 16M15 1L8 8.500 15 16" /></svg>
            <svg width="16" height="18" fill="none" stroke="#252423" stroke-width="1.600"><path d="M14.500 1.500V16.500L8 11H2V7H8Z" /></svg>
            <span>Filters</span>
          </aside>
        </div>
        <footer class="pages">
          <svg width="210" height="44" fill="none" stroke="#605e5c" stroke-width="1.700">
            <path d="M66.500 10H89.500V22.500H66.500ZM78 23V26M73 26.500H83" />
            <rect x="125.500" y="7" width="15.500" height="23.500" rx="1.500" /><path d="M131 26.500H135" />
            <path d="M64 36.500H94" stroke="#117865" stroke-width="3" />
            <path d="M174 17L168 21.500 174 26ZM196 17L202 21.500 196 26Z" fill="#c8c6c4" stroke="none" />
          </svg>
          <div class="ptab">Page 1</div>
          <div class="plus"><svg width="14" height="14" stroke="#fff" stroke-width="4"><path d="M7 0V14M0 7H14" /></svg></div>
        </footer>
      </div>

      <aside class="viz">
        <div class="phead"><h2>Visualizations</h2><svg width="17" height="18" class="dbl"><path d="M1 1L8 8.500 1 16M8 1L15 8.500 8 16" /></svg></div>
        <h3>Build visual</h3>
        <div class="modes">
          <div class="mode"><svg width="30" height="30"><path d="M0 1H24" stroke="#252423" stroke-width="1.500" /><rect x="1" y="7.500" width="28" height="9" fill="#117865" /><rect x="1" y="20.500" width="28" height="9" fill="#117865" /><path d="M1 7.500H29V16.500H1ZM1 20.500H29V29.500H1Z" fill="none" stroke="#252423" stroke-width="1.600" stroke-dasharray="2.500 1.500" /></svg></div>
          <svg class="fmt" width="32" height="32" fill="none" stroke="#252423" stroke-width="1.500"><path d="M6 29.500H1V1H13L21 9V13M13 1V9H21" /><path d="M29 11Q31 12 29 15L19 27 16 24 26 13Q28 11 29 11ZM16 24Q12 24 12 27 11 30 8 30 17 31 19 27" /></svg>
        </div>
        <svg class="notch" width="225" height="12" fill="none" stroke="#797775" stroke-width="1.300"><path d="M0 10.500H20L30 1.500 40 10.500H225" /></svg>
        <div class="gallery"><svg v-for="(g, i) in gallery" :key="i" width="23" height="23" viewBox="0 0 23 23" v-html="g"></svg></div>
        <div class="ellipsis"><i></i><i></i><i></i></div>
        <div class="wells">
          <p class="lab">Values</p>
          <div class="well w1">Add data fields here</div>
          <p class="lab drill">Drill through</p>
          <div class="row cross"><span>Cross-report</span><span class="toggle"><i></i>Off</span></div>
          <div class="row keep"><span>Keep all filters</span><span class="toggle on">On<i></i></span></div>
          <div class="well w2">Add drill-through fields here</div>
        </div>
      </aside>

      <aside class="data">
        <div class="phead"><h2>Data</h2><svg width="17" height="18" class="dbl"><path d="M1 1L8 8.500 1 16M8 1L15 8.500 8 16" /></svg></div>
        <div class="dsearch"><svg width="19" height="19" fill="none" stroke="#605e5c" stroke-width="1.400"><circle cx="8" cy="7.500" r="6.500" /><path d="M12.500 12.500L18 18" /></svg><span>Search</span></div>
        <div class="trow root">
          <svg width="16" height="10" fill="none" stroke="#605e5c" stroke-width="1.300"><path d="M1 1L8 8 15 1" /></svg>
          <svg width="16" height="16" fill="none" stroke="#252423" stroke-width="1.400"><rect x="1" y="1" width="14" height="14" rx="2" /><path d="M1 5.500H15M1 10.500H15M5.500 1V15M10.500 1V15" /></svg>
          <span>gold extsales</span>
        </div>
        <div v-for="f in fields" :key="f[0]" class="trow">
          <svg class="exp" width="9" height="15" fill="none" stroke="#605e5c" stroke-width="1.300"><path v-if="f[1] === 'd'" d="M1 1L8 7.500 1 14" /></svg>
          <i class="cb"></i>
          <svg class="fi" width="16" height="16" fill="none" stroke="#252423" stroke-width="1.400">
            <path v-if="f[1] === 's'" d="M14 1H2L8.500 8 2 15H14" />
            <g v-else-if="f[1] === 'd'"><rect x="1" y="1" width="14" height="14" rx="2.500" /><path d="M1 5H15" /><path d="M4 8.500H6M7 8.500H9M10 8.500H12M4 11.500H6M7 11.500H9" stroke-width="1.800" /></g>
          </svg>
          <span>{{ f[0] }}</span>
        </div>
      </aside>
    </main>

    <footer class="status">
      <span>Page 1 of 1</span>
      <svg class="zoom" width="156" height="20" stroke="#605e5c" fill="none"><path d="M1 8.500H6" stroke-width="2" /><path d="M13 9.500H138M75.500 6V13" stroke-width="1.200" /><rect x="60" y="3" width="5" height="13" fill="#605e5c" stroke="none" /><path d="M145 9.500H155M150 4.500V14.500" stroke-width="1.800" /></svg>
      <span class="pct">82%</span>
      <svg width="22" height="17" fill="none" stroke="#605e5c" stroke-width="1.500"><rect x="1" y="1" width="20" height="15" /><path d="M4 7V4.500H7M15 4.500H18V7M18 10V12.500H15M7 12.500H4V10" stroke-width="1.300" /></svg>
    </footer>

    <footer class="task">
      <svg class="weather" width="44" height="40"><circle cx="12" cy="15" r="5" fill="#ffd25a" /><path d="M8 31Q1 31 1 25 1 19 8 19 10 12 17 12 24 13 25 18 33 18 33 25 33 31 27 31Z" fill="#c4d8f4" /><path d="M8 31Q1 31 1 26 12 30 33 25 33 31 27 31Z" fill="#8aaee6" /><circle cx="26" cy="9" r="10" fill="#c42b1c" /><text x="26" y="13.500" text-anchor="middle" font-size="12" fill="#fff">4</text></svg>
      <div class="wt"><span>33°C</span><span class="cl">Cloudy</span></div>
      <svg class="start" width="30" height="30"><defs><linearGradient id="wl" x1="0" y1="0" x2="1" y2="1"><stop offset="0" stop-color="#5ad0fb" /><stop offset="1" stop-color="#0a70d0" /></linearGradient></defs><path d="M0 1Q0 0 1 0H14V14H0ZM15 0H28Q29 0 29 1V14H15ZM0 15H14V29H1Q0 29 0 28ZM15 15H29V28Q29 29 28 29H15Z" fill="url(#wl)" /></svg>
      <div class="tsearch">
        <svg width="20" height="20" fill="none" stroke="#252423" stroke-width="2.200"><circle cx="8.500" cy="8" r="6.800" /><path d="M13 13L18 18.500" /></svg>
        <span>Search</span>
        <svg class="deco" width="54" height="28"><path d="M6 1V6M10 0V6M14 1V6" stroke="#90858a" stroke-width="1.200" /><rect x="2" y="8" width="17" height="15" rx="2" fill="#d3c8e0" /><rect x="4" y="11" width="8" height="9" rx="3" fill="#b58a6a" /><path d="M19 11Q24 11 23 15 22 18 19 18" fill="none" stroke="#cabfd6" stroke-width="2" /><path d="M0 24H24L22 26H2Z" fill="#8a5a58" /><path d="M30 27Q36 17 47 5" stroke="#4c7a24" stroke-width="1.500" fill="none" /><path d="M33 20Q25 18 27 11 33 14 33 20ZM37 14Q31 9 35 3 40 8 37 14ZM42 11Q44 2 53 2 52 10 42 11ZM38 17Q43 11 50 14 45 20 38 17ZM34 22Q40 17 46 22 39 26 34 22Z" fill="#6a9c34" /></svg>
      </div>
      <div class="apps">
        <div v-for="(a, i) in apps" :key="i" class="appi" :class="{ run: a[1], cur: a[1] === 2 }"><svg width="30" height="30" viewBox="0 0 30 30" v-html="a[0]"></svg></div>
      </div>
      <svg class="up" width="14" height="9" fill="none" stroke="#252423" stroke-width="1.700"><path d="M1 8L7 2 13 8" /></svg>
      <div class="lang"><span>ENG</span><span>IN</span></div>
      <svg class="tray" width="82" height="22" fill="none" stroke="#1b1a19" stroke-width="1.600">
        <path d="M1 8Q10 0 19 8" stroke="#a8b098" /><path d="M3.500 11Q10 5 16.500 11M6 13.500Q10 10 14 13.500" /><circle cx="10" cy="16" r="1.500" fill="#1b1a19" stroke="none" />
        <path d="M31 8H34L39 4V18L34 14H31ZM41.500 8Q43.500 11 41.500 14" /><path d="M44 6Q48 11 44 16M46.500 4Q51.500 11 46.500 18" stroke="#a8b098" />
        <rect x="61.500" y="6" width="16" height="10" rx="2" /><rect x="64" y="8" width="11.500" height="6.500" fill="#1b1a19" stroke="none" /><path d="M78.500 9V13" stroke-width="2" /><path d="M64 0L60 6H63L61 11 67 4H64Z" fill="#1b1a19" stroke="none" />
      </svg>
      <div class="clock"><span>10:51</span><span>21-05-2025</span></div>
    </footer>
  </div>
</template>

<style>
body { margin: 0; overflow: hidden; }
</style>

<style scoped>
.app { width: 1920px; height: 1080px; display: flex; flex-direction: column; font-family: "Open Sans", "Noto Sans", sans-serif; font-size: 14px; color: #252423; background: #fff; overflow: hidden; letter-spacing: -0.25px; }
* { box-sizing: border-box; }
svg { flex: none; overflow: visible; }
svg text { letter-spacing: 0; }
.title { height: 43px; flex: none; background: #3b3a38; color: #fff; display: flex; align-items: center; }
.tb { width: 126px; }
.doc { width: 620px; padding-top: 5px; font-size: 14.500px; letter-spacing: -0.1px; }
.search { width: 500px; height: 30px; background: #d4d4d2; border-radius: 3px; color: #1d5c4e; display: flex; align-items: center; font-size: 17px; letter-spacing: -0.4px; margin-top: -1px; }
.search svg { margin: 0 14px 2px 20px; }
.sign { margin-left: 407px; width: 57px; white-space: nowrap; letter-spacing: 0.1px; }
.win { margin-left: 39px; margin-top: 3px; }
.tabs { height: 43px; flex: none; background: #fafafa; display: flex; align-items: flex-start; padding-top: 5px; font-size: 16.500px; letter-spacing: -0.15px; }
.tab { height: 33px; line-height: 29px; white-space: nowrap; border-bottom: 3px solid transparent; }
.tab.on { font-weight: 700; letter-spacing: -0.5px; border-color: #117865; }
.share { margin: 0 7px 0 auto; width: 105px; height: 30px; border: 0; border-radius: 4px; background: #117865; color: #fff; font: 15px "Open Sans", sans-serif; letter-spacing: -0.6px; display: flex; align-items: center; padding: 0 0 0 9px; gap: 6px; }
.share span { margin: -2px 0 0 4px; }
.ribbon { height: 115px; flex: none; background: #fafafa; display: flex; position: relative; z-index: 3; box-shadow: 0 1px 4px rgba(0, 0, 0, .2); padding-top: 2px; }
.group { height: 110px; border-right: 1px solid #d2d0ce; display: flex; flex-direction: column; }
.clip { width: 201px; }
.items { display: flex; height: 95px; padding-top: 4px; }
.item { display: flex; flex-direction: column; align-items: center; white-space: nowrap; line-height: 20px; }
.item > span { height: 20px; }
.item.recent { letter-spacing: 0; }
.ric { width: 40px; height: 42px; margin-bottom: 3px; }
.chev { margin-left: 3px; vertical-align: 1px; }
.off { color: #c8c6c4; letter-spacing: 0.05px; }
.prep { letter-spacing: 0; }
.paste { width: 34px; margin-left: 18px; }
.mini { margin: -5px 0 0 12px; color: #c8c6c4; letter-spacing: 0; }
.mini div { height: 30px; display: flex; align-items: center; gap: 3px; white-space: nowrap; }
.gname { font-size: 12px; line-height: 17px; text-align: center; letter-spacing: -0.1px; }
.collapse { position: absolute; right: 6px; bottom: 8px; }
.work { height: 789px; flex: none; display: flex; }
.left { width: 1468px; display: flex; flex-direction: column; }
.upper { height: 745px; display: flex; }
.rail { width: 51px; background: #f3f2f1; border-right: 1px solid #d8d6d4; position: relative; }
.active { position: absolute; left: 0; top: 0; width: 3px; height: 49px; background: #117865; }
.canvas { width: 1376px; background: #fff; }
.report { position: relative; margin-left: 32px; width: 1312px; height: 737px; border: 2px dotted #4a4846; border-top: 0; }
.visual { position: absolute; }
.gauge { left: -1px; top: 39px; width: 450px; height: 310px; }
.card { left: 655px; top: 89px; width: 400px; height: 110px; }
.line { left: -1px; top: 419px; width: 460px; height: 315px; }
.donut { left: 475px; top: 259px; width: 830px; height: 475px; }
.vt { font: 400 16px Roboto, sans-serif; fill: #1b1a19; stroke: #1b1a19; stroke-width: .2px; }
.value { font: 300 55px Roboto, sans-serif; fill: #605e5c; }
.big { font: 500 55px Roboto, sans-serif; fill: #252423; }
.end { font-size: 15px; fill: #605e5c; }
.grid path { stroke: #d4d2d0; stroke-width: 1.200; stroke-dasharray: 1.500 4; }
.ax, .dl { font-size: 12px; fill: #605e5c; }
.axt { font: 400 13.500px Roboto, sans-serif; fill: #1b1a19; stroke: #1b1a19; stroke-width: .2px; }
.lead path { fill: none; stroke: #b3b0ad; stroke-width: 1; }
.lt { font-size: 13.500px; font-weight: 700; fill: #605e5c; }
.lk { font-size: 14px; fill: #605e5c; }
.filters { width: 41px; background: #fff; border-left: 1px solid #b3b0ad; display: flex; flex-direction: column; align-items: center; padding-top: 14px; }
.filters svg + svg { margin: 17px 0 0 8px; }
.filters span { writing-mode: vertical-rl; margin-top: 8px; font-weight: 600; font-size: 18px; letter-spacing: 0.1px; }
.dbl { fill: none; stroke: #252423; stroke-width: 1.500; }
.pages { height: 44px; background: #f3f2f1; display: flex; }
.ptab { width: 95px; background: #fff; border-left: 1px solid #a19f9d; border-right: 1px solid #a19f9d; border-bottom: 5px solid #117865; text-align: center; line-height: 45px; font-weight: 600; font-size: 14.500px; letter-spacing: -0.4px; }
.plus { width: 49px; background: #117865; display: flex; align-items: center; justify-content: center; padding-bottom: 3px; }
.viz { width: 226px; background: #f3f2f1; border-left: 1px solid #d8d6d4; }
.phead { display: flex; justify-content: space-between; align-items: center; padding: 10px 9px 0 10px; height: 36px; }
h2 { margin: 0; font-size: 18.500px; font-weight: 600; letter-spacing: -0.45px; }
h3 { margin: 11px 0 0 10px; font-size: 14.500px; line-height: 20px; font-weight: 600; letter-spacing: -0.3px; }
.modes { display: flex; padding-left: 10px; margin-top: 4px; height: 40px; }
.mode { width: 40px; height: 40px; background: #d2d0ce; border-radius: 3px; display: flex; align-items: center; justify-content: center; }
.fmt { margin: 5px 0 0 47px; }
.notch { display: block; margin-top: 5px; }
.gallery { display: grid; grid-template-columns: repeat(6, 23px); gap: 12px; padding: 13px 0 0 14px; }
.ellipsis { display: flex; gap: 5px; padding: 20px 0 0 17px; }
.ellipsis i { width: 2px; height: 2px; background: #252423; }
.wells { margin-top: 24px; border-top: 1px solid #d8d6d4; padding: 11px 7px 0 5px; font-size: 14px; letter-spacing: 0.1px; }
.lab { margin: 0 0 0 10px; line-height: 20px; }
.drill { margin-top: 14px; font-weight: 500; color: #484644; letter-spacing: 0.2px; }
.well { background: #fff; border: 1px dashed #c8c6c4; border-radius: 2px; white-space: nowrap; }
.w1 { height: 35px; line-height: 33px; padding-left: 12px; margin-top: 6px; }
.w2 { height: 33px; line-height: 31px; padding-left: 10px; margin-top: 13px; letter-spacing: 0.15px; }
.row { display: flex; align-items: center; justify-content: space-between; height: 20px; padding: 0 20px 0 10px; }
.cross { margin-top: 11px; }
.keep { margin-top: 14px; }
.toggle { width: 40px; height: 20px; border: 1px solid #797775; border-radius: 10px; background: #fff; font-size: 10.500px; display: flex; align-items: center; gap: 2px; padding-left: 5px; color: #605e5c; }
.toggle i { width: 10px; height: 10px; border-radius: 50%; background: #605e5c; }
.toggle.on { background: #117865; border-color: #117865; color: #fff; gap: 3px; }
.toggle.on i { background: #fff; }
.data { width: 226px; background: #f3f2f1; border-left: 1px solid #d8d6d4; }
.dsearch { margin: 20px 0 11px 5px; width: 215px; height: 30px; background: #fff; border: 1px solid #c8c6c4; border-bottom-color: #605e5c; border-radius: 4px; display: flex; align-items: center; gap: 8px; padding-left: 14px; font-size: 17px; color: #605e5c; letter-spacing: -0.3px; }
.dsearch span { padding-top: 1px; }
.trow { height: 30px; display: flex; align-items: center; padding-left: 38px; }
.root { padding-left: 16px; }
.root svg + svg { margin: 0 7px 0 4px; }
.cb { width: 15px; height: 15px; border: 1px solid #797775; border-radius: 2px; margin-left: 8px; }
.fi { margin: 0 6px 0 10px; }
.trow span { font-size: 14px; letter-spacing: -0.1px; }
.status { height: 29px; flex: none; background: #f3f2f1; border-top: 1px solid #d8d6d4; display: flex; align-items: center; padding: 2px 22px 0 5px; color: #484644; letter-spacing: 0.1px; }
.zoom { margin-left: auto; margin-right: 14px; }
.pct { width: 52px; letter-spacing: -0.4px; color: #605e5c; margin-top: -3px; }
.task { height: 61px; flex: none; border-top: 2px solid #0c0c0c; background: linear-gradient(90deg, #e2ebaa 0, #deebb0 24%, #e0ecb2 32%, #e6e6ac 42%, #e5dcc2 48%, #dde3c8 54%, #e0dfd0 62%, #eedcc0 76%, #ece2b0 83%, #dce8c4 88%, #d9e6c8 95%, #dde2c4 100%); display: flex; align-items: center; }
.weather { margin-left: 23px; width: 41px; margin-top: -3px; }
.wt, .lang, .clock { display: flex; flex-direction: column; line-height: 20px; margin-top: -1px; letter-spacing: 0; }
.wt { width: 439px; }
.cl { color: #555c42; letter-spacing: 0.25px; }
.start { margin-top: 1px; }
.tsearch { width: 273px; height: 38px; border-radius: 19px; background: #f6f9e6; border: 1px solid #cdd6a4; margin: -1px 0 0 16px; display: flex; align-items: center; padding: 0 5px 0 13px; font-size: 16.500px; color: #4a4a44; letter-spacing: -0.2px; }
.tsearch span { margin-left: 10px; }
.deco { margin-left: auto; }
.apps { display: flex; margin: -1px 0 0 7px; }
.appi { width: 48px; height: 48px; margin-right: 7.100px; display: flex; align-items: center; justify-content: center; position: relative; border-radius: 5px; }
.run::after { content: ""; position: absolute; bottom: 0; width: 7px; height: 4px; border-radius: 2px; background: #84826c; }
.cur { background: #f5efdb; border: 1px solid #ebe3c8; }
.cur::after { width: 20px; background: #237f90; }
.up { margin-left: 190px; margin-top: -2px; }
.lang { width: 40px; margin-left: 21px; align-items: center; }
.tray { margin: -2px 0 0 17px; }
.clock { margin: -1px 25px 0 auto; align-items: flex-end; }
</style>
